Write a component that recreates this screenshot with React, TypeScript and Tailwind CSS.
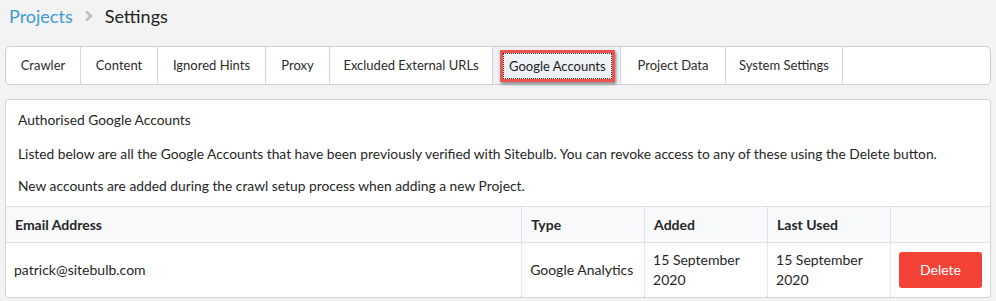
import React from "react";

const tabs = [
  { label: "Crawler", w: "w-[75px]" },
  { label: "Content", w: "w-[77px]" },
  { label: "Ignored Hints", w: "w-[108px]" },
  { label: "Proxy", w: "w-[64px]" },
  { label: "Excluded External URLs", w: "w-[163px]" },
  { label: "Google Accounts", w: "w-[128px]" },
  { label: "Project Data", w: "w-[105px]" },
  { label: "System Settings", w: "w-[117px]" },
];

function Tabs({ active }: { active: string }) {
  return (
    <div className="flex h-[39px] rounded-[5px] border border-[#cfcfcf] bg-white">
      {tabs.map((t) => (
        <div
          key={t.label}
          className={
            "flex items-center border-r border-[#d4d4d4] " +
            t.w +
            (t.label === active ? " bg-[#eef1f5] pl-[7px]" : " justify-center")
          }
        >
          {t.label === active ? (
            <span className="border-[3px] border-[#f0534d] shadow-[1px_2px_3px_rgba(0,0,0,0.45)]">
              <span className="block border border-dotted border-[#333] px-[5px] py-[3px] text-[13px] leading-[18px] text-[#1d1d1d]">
                {t.label}
              </span>
            </span>
          ) : (
            <span className="text-[13px] text-[#2b2b2b]">{t.label}</span>
          )}
        </div>
      ))}
    </div>
  );
}

export default function App() {
  return (
    <div
      className="min-h-[301px] bg-[#f3f3f3] px-[5px] pt-[5px] text-[#262626]"
      style={{ fontFamily: "Lato, 'Open Sans', sans-serif" }}
    >
      <div className="flex items-center pl-[4px] text-[18px] leading-[22px]">
        <span className="text-[#3c9bd7]">Projects</span>
        <svg width="10" height="12" viewBox="0 0 10 12" className="mx-[11px]">
          <path d="M2 1.5 L7 6 L2 10.5" fill="none" stroke="#bdbdbd" strokeWidth="2.4" />
        </svg>
        <span className="text-[#222]">Settings</span>
      </div>

      <div className="mt-[19px]">
        <Tabs active="Google Accounts" />
      </div>

      <div className="mt-[14px] rounded-[3px] border border-[#d4d4d4] bg-white text-[14px] leading-[20px]">
        <div className="px-[12px] pt-[10px] pb-[10px] text-[13.8px]">
          <p>Authorised Google Accounts</p>
          <p className="mt-[14px]">
            Listed below are all the Google Accounts that have been previously verified with Sitebulb. You can revoke
            access to any of these using the Delete button.
          </p>
          <p className="mt-[12px]">New accounts are added during the crawl setup process when adding a new Project.</p>
        </div>
        <table className="w-full border-collapse">
          <thead>
            <tr className="h-[36px] border-y border-[#dee2e6] bg-[#f8f9fb] text-left font-bold">
              <th className="w-[516px] px-[9px] font-bold">Email Address</th>
              <th className="w-[123px] border-l border-[#dee2e6] px-[9px] font-bold">Type</th>
              <th className="w-[123px] border-l border-[#dee2e6] px-[9px] font-bold">Added</th>
              <th className="w-[123px] border-l border-[#dee2e6] px-[9px] font-bold">Last Used</th>
              <th className="border-l border-[#dee2e6]"></th>
            </tr>
          </thead>
          <tbody>
            <tr className="h-[54px]">
              <td className="px-[8px]">patrick@sitebulb.com</td>
              <td className="border-l border-dotted border-[#d6d6d6] px-[8px]">Google Analytics</td>
              <td className="border-l border-dotted border-[#d6d6d6] px-[8px]">
                15 September
                <br />
                2020
              </td>
              <td className="border-l border-dotted border-[#d6d6d6] px-[8px]">
                15 September
                <br />
                2020
              </td>
              <td className="border-l border-dotted border-[#d6d6d6] px-[8px]">
                <button className="h-[36px] w-[83px] rounded-[3px] bg-[#f44336] text-[14px] text-white">
                  Delete
                </button>
              </td>
            </tr>
          </tbody>
        </table>
      </div>
    </div>
  );
}
